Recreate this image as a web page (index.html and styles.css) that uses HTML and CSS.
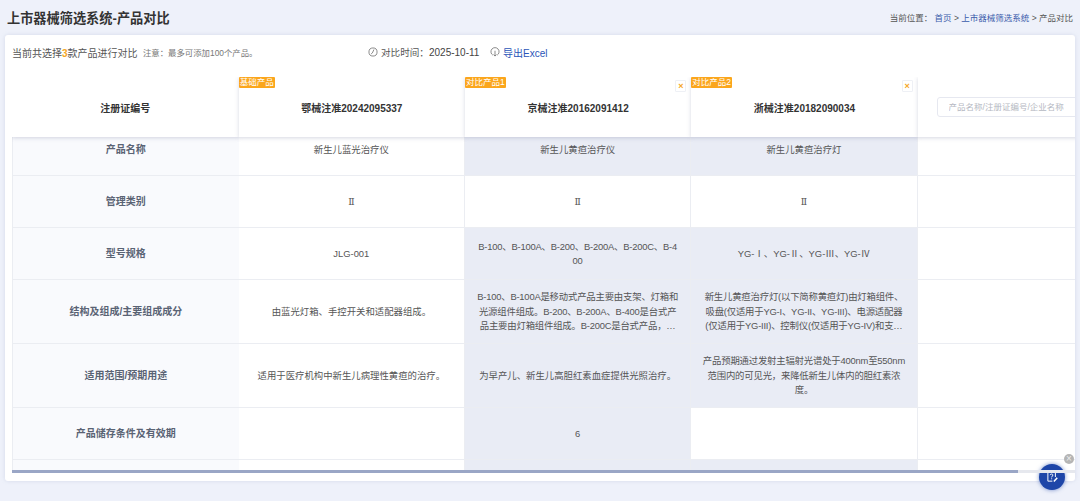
FILE: index.html
```html
<!DOCTYPE html>
<html lang="zh-CN">
<head>
    <meta charset="UTF-8">
    <meta name="viewport" content="width=device-width, initial-scale=1.0">
    <title>上市器械筛选系统-产品对比</title>
    <link rel="stylesheet" href="styles.css">
</head>
<body>
    <div class="page-head">
        <h1>上市器械筛选系统-产品对比</h1>
        <div class="crumbs">
            <span>当前位置：</span>
            <a>首页</a> &gt; <a>上市器械筛选系统</a> &gt; 产品对比
        </div>
    </div>

    <div class="card">
        <div class="toolbar">
            <div class="summary">当前共选择<b>3</b>款产品进行对比</div>
            <div class="note">注意：最多可添加100个产品。</div>
            <div class="compare-time">
                <svg class="icon" viewBox="0 0 16 16"><circle cx="8" cy="8" r="6.5"/><path d="M9.500 4 7 9.500 5 11"/></svg>
                <span>对比时间：</span>
                <span class="date">2025-10-11</span>
            </div>
            <a class="export">
                <svg class="icon" viewBox="0 0 16 16"><path d="M4.500 13A6.500 6.500 0 1 1 11.500 13"/><path d="M8 6v8.500M5.500 12 8 14.500 10.500 12"/></svg>
                <span>导出Excel</span>
            </a>
        </div>

        <div class="table">
            <div class="head">
                <div class="head-cell">注册证编号</div>
                <div class="head-cell"><span class="tag">基础产品</span>鄂械注准20242095337</div>
                <div class="head-cell"><span class="tag">对比产品1</span>京械注准20162091412<span class="close">×</span></div>
                <div class="head-cell"><span class="tag">对比产品2</span>浙械注准20182090034<span class="close">×</span></div>
                <div class="head-cell search-cell"><input type="text" placeholder="产品名称/注册证编号/企业名称"></div>
            </div>

            <div class="rows">
                <div class="row">
                    <div class="cell label">产品名称</div>
                    <div class="cell">新生儿蓝光治疗仪</div>
                    <div class="cell diff">新生儿黄疸治疗仪</div>
                    <div class="cell diff">新生儿黄疸治疗灯</div>
                    <div class="cell"></div>
                </div>
                <div class="row">
                    <div class="cell label">管理类别</div>
                    <div class="cell roman">Ⅱ</div>
                    <div class="cell roman">Ⅱ</div>
                    <div class="cell roman">Ⅱ</div>
                    <div class="cell"></div>
                </div>
                <div class="row">
                    <div class="cell label">型号规格</div>
                    <div class="cell">JLG-001</div>
                    <div class="cell diff"><p class="tight">B-100、B-100A、B-200、B-200A、B-200C、B-400</p></div>
                    <div class="cell diff">YG-Ⅰ、YG-Ⅱ、YG-Ⅲ、YG-Ⅳ</div>
                    <div class="cell"></div>
                </div>
                <div class="row row-tall">
                    <div class="cell label">结构及组成/主要组成成分</div>
                    <div class="cell">由蓝光灯箱、手控开关和适配器组成。</div>
                    <div class="cell diff"><p class="tight clamp">B-100、B-100A是移动式产品主要由支架、灯箱和光源组件组成。B-200、B-200A、B-400是台式产品主要由灯箱组件组成。B-200C是台式产品，主要由灯箱组件和适配器组成。</p></div>
                    <div class="cell diff"><p class="tight clamp">新生儿黄疸治疗灯(以下简称黄疸灯)由灯箱组件、吸盘(仅适用于YG-I、YG-II、YG-III)、电源适配器(仅适用于YG-III)、控制仪(仅适用于YG-IV)和支架组成。</p></div>
                    <div class="cell"></div>
                </div>
                <div class="row row-tall">
                    <div class="cell label">适用范围/预期用途</div>
                    <div class="cell">适用于医疗机构中新生儿病理性黄疸的治疗。</div>
                    <div class="cell diff">为早产儿、新生儿高胆红素血症提供光照治疗。</div>
                    <div class="cell diff"><p class="tight">产品预期通过发射主辐射光谱处于400nm至550nm范围内的可见光，来降低新生儿体内的胆红素浓度。</p></div>
                    <div class="cell"></div>
                </div>
                <div class="row">
                    <div class="cell label">产品储存条件及有效期</div>
                    <div class="cell"></div>
                    <div class="cell diff">6</div>
                    <div class="cell"></div>
                    <div class="cell"></div>
                </div>
                <div class="row">
                    <div class="cell label"></div>
                    <div class="cell"></div>
                    <div class="cell diff"></div>
                    <div class="cell diff"></div>
                    <div class="cell"></div>
                </div>
            </div>

            <div class="scrollbar"><div class="thumb"></div></div>
        </div>
    </div>

    <span class="fab-close">×</span>
    <div class="fab">
        <svg viewBox="0 0 16 16"><path d="M12.500 8V1.500h-10v12h6"/><path d="M5.500 5.500C5.700 3.400 9.300 3.600 9.200 5.500 9.100 6.900 7.500 6.900 7.500 8.500"/><path d="M7.500 9.800v1.200"/><path class="pen" d="M10.500 14 15 9"/></svg>
    </div>
</body>
</html>
```

FILE: styles.css
```css
* {
    box-sizing: border-box;
    margin: 0;
    padding: 0;
}
body {
    font-family: "Liberation Sans", "Noto Sans CJK SC", sans-serif;
    background-color: #eef1fa;
    color: #444;
    height: 501px;
    overflow: hidden;
    position: relative;
}
.page-head {
    height: 35px;
    padding: 0 7px 1px;
    display: flex;
    justify-content: space-between;
    align-items: center;
}
h1 {
    font-size: 13.2px;
    font-weight: bold;
    color: #333;
}
.crumbs {
    font-size: 8.5px;
    color: #555;
}
.crumbs a {
    color: #3a5cab;
}
.card {
    margin: 0 5px;
    height: 446px;
    background-color: #fff;
    border-radius: 3px;
    padding-left: 7px;
    box-shadow: 0 0 4px rgba(120, 130, 170, 0.2);
    overflow: hidden;
}
.toolbar {
    height: 42px;
    padding-bottom: 8px;
    display: flex;
    align-items: center;
}
.summary {
    font-size: 10px;
    color: #555;
    width: 131px;
}
.summary b {
    color: #f5a623;
}
.note {
    font-size: 8.4px;
    color: #777;
    width: 225px;
}
.compare-time {
    display: flex;
    align-items: center;
    font-size: 9.6px;
    color: #555;
    width: 122px;
}
.date {
    color: #444;
    font-size: 10px;
}
.export {
    display: flex;
    align-items: center;
    font-size: 10px;
    color: #2a55b8;
}
.icon {
    width: 10px;
    height: 10px;
    margin-right: 3px;
    fill: none;
    stroke: #666;
    stroke-width: 1.2;
}
.head {
    display: grid;
    grid-template-columns: 226.7px 226.3px 226.3px 226.3px 226.3px;
    height: 60px;
    position: relative;
    z-index: 2;
}
.head-cell {
    position: relative;
    background-color: #fff;
    display: flex;
    justify-content: center;
    align-items: center;
    font-size: 10px;
    font-weight: bold;
    color: #333;
    box-shadow: 0 1px 4px rgba(90, 100, 140, 0.25);
}
.search-cell {
    justify-content: flex-start;
    padding-left: 19px;
}
.search-cell input {
    width: 190px;
    height: 20px;
    padding: 0 11px;
    border: 1px solid #e6e8f0;
    border-radius: 3px;
    font-family: inherit;
    font-size: 8.5px;
}
.search-cell input::placeholder {
    color: #b5b8c2;
}
.tag {
    position: absolute;
    left: 0;
    top: 0;
    height: 11px;
    line-height: 11px;
    padding: 0 1px;
    background-color: #fba61c;
    border-radius: 1px;
    color: #fff;
    font-size: 8.5px;
    font-weight: normal;
}
.close {
    position: absolute;
    right: 5px;
    top: 3px;
    width: 11px;
    height: 12px;
    line-height: 11px;
    text-align: center;
    border: 1px solid #eef0f5;
    border-radius: 1px;
    color: #f5a623;
    font-size: 9px;
    font-weight: bold;
}
.table {
    position: relative;
    height: 396px;
    overflow: hidden;
}
.rows {
    margin-top: -13px;
}
.row {
    display: grid;
    grid-template-columns: 226.7px 226.3px 226.3px 226.3px 226.3px;
    height: 52px;
}
.row-tall {
    height: 64px;
}
.cell {
    display: flex;
    justify-content: center;
    align-items: center;
    padding: 1px 11px 0;
    text-align: center;
    font-size: 9.4px;
    line-height: 14.4px;
    color: #555;
    word-break: break-all;
    border-bottom: 1px solid #ebedf2;
    border-right: 1px solid #ebedf2;
}
.label {
    background-color: #f9fafd;
    font-size: 10px;
    font-weight: bold;
    color: #5a6374;
    border-left: 1px solid #ebedf2;
    border-right: none;
    padding-top: 2px;
}
.diff {
    background-color: #e9ecf5;
}
.roman {
    font-family: "DejaVu Serif", serif;
}
.tight {
    letter-spacing: -0.2px;
}
.clamp {
    display: -webkit-box;
    -webkit-box-orient: vertical;
    -webkit-line-clamp: 3;
    overflow: hidden;
}
.scrollbar {
    position: absolute;
    left: 0;
    right: 0;
    bottom: 0;
    height: 3px;
    background-color: #e6e8ee;
    z-index: 3;
}
.thumb {
    width: 1006px;
    height: 100%;
    background-color: #9aa6c6;
}
.fab {
    position: absolute;
    left: 1039px;
    top: 464px;
    width: 26px;
    height: 26px;
    border-radius: 50%;
    background-color: #1e46a8;
    box-shadow: 0 0 4px rgba(30, 70, 168, 0.6);
    display: flex;
    justify-content: center;
    align-items: center;
}
.fab svg {
    width: 12px;
    height: 12px;
    fill: none;
    stroke: #fff;
    stroke-width: 1.3;
}
.fab .pen {
    stroke-width: 2;
}
.fab-close {
    position: absolute;
    left: 1064px;
    top: 454px;
    width: 10px;
    height: 10px;
    border-radius: 50%;
    background-color: #b5b5b5;
    color: #eee;
    font-size: 10px;
    line-height: 10px;
    text-align: center;
}
```
